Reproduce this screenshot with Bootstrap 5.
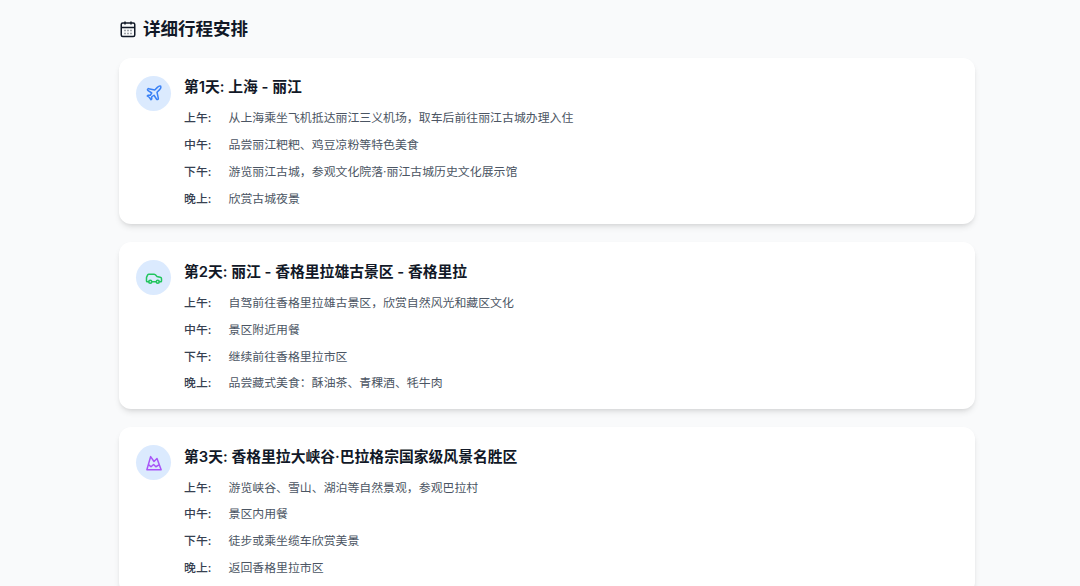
<!doctype html>
<html lang="zh"><head><meta charset="utf-8">
<link href="https://cdn.jsdelivr.net/npm/bootstrap@5.3.0/dist/css/bootstrap.min.css" rel="stylesheet">
<style>
html,body{height:586px;overflow:hidden;background:#f9fafb}
body{font-family:Inter,"Noto Sans CJK SC",sans-serif;color:#111827}
.wrap{width:856px;margin-left:119px;padding-top:15px}
.sec-title{font-size:17.500px;font-weight:700;line-height:28px;margin:0 0 14.500px;gap:6px;color:#111827}
.day-card{background:#fff;border-radius:12px;box-shadow:0 4px 6px -1px rgba(0,0,0,.1),0 2px 4px -2px rgba(0,0,0,.1);padding:18px 17px 12.500px;margin-bottom:18px;gap:13px}
.day-ico{width:35px;height:35px;border-radius:50%;background:#dbeafe;flex:none}
.day-name{font-size:14.800px;font-weight:600;line-height:24px;margin:-.5px 0 5.300px;color:#111827}
.slot{font-size:11.900px;line-height:17.500px;padding:4.700px 0;color:#4b5563}
.slot-k{width:44.500px;flex:none;font-weight:500;color:#374151}
</style></head><body>
<div class="wrap">
<h2 class="sec-title d-flex align-items-center"><svg width="18" height="18" viewBox="0 0 24 24" fill="none" stroke="#111827" stroke-width="2"><rect x="3" y="4" width="18" height="18" rx="2"/><path d="M8 2v4M16 2v4M3 10h18M7.500 14h1M11.500 14h1M15.500 14h1M7.500 18h1M11.500 18h1M15.500 18h1"/></svg>详细行程安排</h2>

<div class="day-card d-flex">
<div class="day-ico d-flex align-items-center justify-content-center"><svg width="18" height="18" viewBox="0 0 24 24" fill="none" stroke="#3b82f6" stroke-width="2" stroke-linejoin="round" stroke-linecap="round"><path d="M17.800 19.200 16 11l3.500-3.500C21 6 21.500 4 21 3c-1-.5-3 0-4.500 1.500L13 8 4.800 6.200c-.5-.1-.9.100-1.100.500l-.3.500c-.2.500-.1 1 .3 1.300L9 12l-2 3H4l-1 1 3 2 2 3 1-1v-3l3-2 3.500 5.300c.3.400.8.500 1.300.300l.5-.2c.4-.3.600-.7.500-1.200z"/></svg></div>
<div class="flex-grow-1">
<h3 class="day-name">第1天: 上海 - 丽江</h3>
<div class="d-flex slot"><span class="slot-k">上午:</span><span>从上海乘坐飞机抵达丽江三义机场，取车后前往丽江古城办理入住</span></div>
<div class="d-flex slot"><span class="slot-k">中午:</span><span>品尝丽江粑粑、鸡豆凉粉等特色美食</span></div>
<div class="d-flex slot"><span class="slot-k">下午:</span><span>游览丽江古城，参观文化院落·丽江古城历史文化展示馆</span></div>
<div class="d-flex slot"><span class="slot-k">晚上:</span><span>欣赏古城夜景</span></div>
</div></div>

<div class="day-card d-flex">
<div class="day-ico d-flex align-items-center justify-content-center"><svg width="18" height="18" viewBox="0 0 24 24" fill="none" stroke="#22c55e" stroke-width="2" stroke-linecap="round" stroke-linejoin="round"><path d="M19 17h2c.6 0 1-.4 1-1v-3c0-.9-.7-1.700-1.500-1.900C18.700 10.600 16 10 16 10s-1.300-1.400-2.200-2.300c-.5-.4-1.100-.7-1.800-.7H5c-.6 0-1.100.4-1.400.9l-1.400 2.900A3.700 3.700 0 0 0 2 12v4c0 .6.400 1 1 1h2"/><circle cx="7" cy="17" r="2"/><path d="M9 17h6"/><circle cx="17" cy="17" r="2"/></svg></div>
<div class="flex-grow-1">
<h3 class="day-name">第2天: 丽江 - 香格里拉雄古景区 - 香格里拉</h3>
<div class="d-flex slot"><span class="slot-k">上午:</span><span>自驾前往香格里拉雄古景区，欣赏自然风光和藏区文化</span></div>
<div class="d-flex slot"><span class="slot-k">中午:</span><span>景区附近用餐</span></div>
<div class="d-flex slot"><span class="slot-k">下午:</span><span>继续前往香格里拉市区</span></div>
<div class="d-flex slot"><span class="slot-k">晚上:</span><span>品尝藏式美食：酥油茶、青稞酒、牦牛肉</span></div>
</div></div>

<div class="day-card d-flex">
<div class="day-ico d-flex align-items-center justify-content-center"><svg width="18" height="18" viewBox="0 0 24 24" fill="none" stroke="#a855f7" stroke-width="2" stroke-linecap="round" stroke-linejoin="round"><path d="M2.500 21 7.500 3.500 12 10l4-4 5.500 15zM5 14.500l3 2.500 3.500-3 3 3 4-2.500"/></svg></div>
<div class="flex-grow-1">
<h3 class="day-name">第3天: 香格里拉大峡谷·巴拉格宗国家级风景名胜区</h3>
<div class="d-flex slot"><span class="slot-k">上午:</span><span>游览峡谷、雪山、湖泊等自然景观，参观巴拉村</span></div>
<div class="d-flex slot"><span class="slot-k">中午:</span><span>景区内用餐</span></div>
<div class="d-flex slot"><span class="slot-k">下午:</span><span>徒步或乘坐缆车欣赏美景</span></div>
<div class="d-flex slot"><span class="slot-k">晚上:</span><span>返回香格里拉市区</span></div>
</div></div>
</div>
<script src="https://cdn.jsdelivr.net/npm/bootstrap@5.3.0/dist/js/bootstrap.bundle.min.js"></script>
</body></html>
